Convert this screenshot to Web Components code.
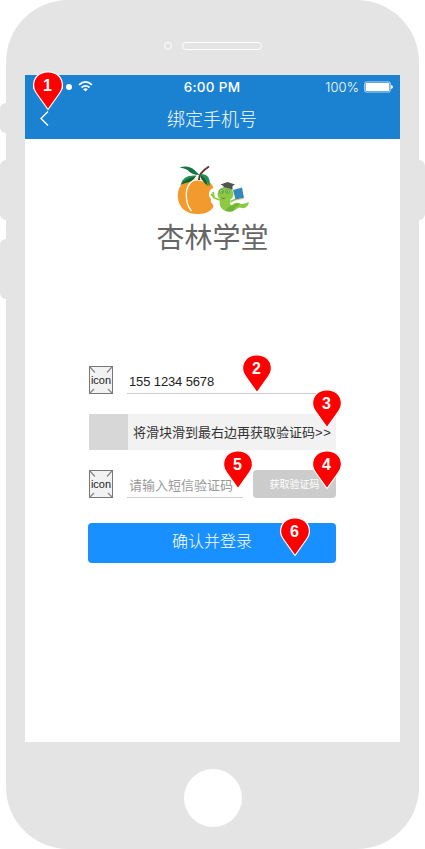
<!DOCTYPE html>
<html lang="zh-CN">
<head>
<meta charset="utf-8">
<title>绑定手机号</title>
<style>
html,body{margin:0;background:#fff;overflow:hidden}
body{font-family:"Liberation Sans","Noto Sans CJK SC",sans-serif}
</style>
</head>
<body>
<phone-frame>
  <status-bar></status-bar>
  <nav-bar>绑定手机号</nav-bar>
  <brand-logo>杏林学堂</brand-logo>
  <bind-form></bind-form>
  <note-pin slot="notes" style="left:33px;top:71px">1</note-pin>
  <note-pin slot="notes" style="left:242px;top:354px">2</note-pin>
  <note-pin slot="notes" style="left:312px;top:389px">3</note-pin>
  <note-pin slot="notes" style="left:312px;top:450px">4</note-pin>
  <note-pin slot="notes" style="left:223px;top:450px">5</note-pin>
  <note-pin slot="notes" style="left:280px;top:517px">6</note-pin>
</phone-frame>
<script>
function define(name, html) {
  const t = document.createElement('template');
  t.innerHTML = html;
  customElements.define(name, class extends HTMLElement {
    constructor() {
      super();
      this.attachShadow({mode: 'open'}).appendChild(t.content.cloneNode(true));
    }
  });
}

define('phone-frame', `<style>
:host{display:flex;position:relative;width:425px;height:849px;justify-content:space-between}
.side{width:6px;display:flex;flex-direction:column;padding-top:103px;box-sizing:border-box}
.side i{display:block;background:#e4e4e4;border-radius:6px 0 0 6px;height:60px;flex:none}
.side .mute{height:30px;margin-bottom:27px}
.side .up{margin-bottom:19px}
.right{padding-top:160px}
.right i{border-radius:0 6px 6px 0}
.body{width:413px;height:849px;box-sizing:border-box;background:#e4e4e4;border-radius:62px;display:flex;flex-direction:column;align-items:center}
.top{height:75px;width:100%;box-sizing:border-box;padding:42px 0 0 158px;display:flex;gap:10px}
.cam,.spk{box-sizing:border-box;border:1px solid #fff;height:8px;border-radius:4px}
.cam{width:8px}.spk{width:80px}
.screen{width:375px;height:667px;background:#fff;display:flex;flex-direction:column}
.home{width:58px;height:58px;border-radius:50%;background:#fff;margin-top:27px;margin-left:1px}
</style>
<div class="side"><i class="mute"></i><i class="up"></i><i></i></div>
<div class="body"><div class="top"><span class="cam"></span><span class="spk"></span></div>
<div class="screen"><slot></slot></div><div class="home"></div></div>
<div class="side right"><i></i></div>
<slot name="notes"></slot>`);

define('status-bar', `<style>
:host{display:grid;grid-template-columns:1fr auto 1fr;align-items:center;height:24px;background:#1b82d2;color:#fff;padding:0 7px 0 6px}
svg{display:block}
.time{font:500 13.5px/24px Inter,sans-serif;letter-spacing:.3px}
.r{display:flex;justify-content:flex-end;align-items:center;gap:5px;font:300 13px/24px Inter,sans-serif;letter-spacing:.1px}
</style>
<svg width="70" height="24" fill="#fff"><circle cx="5" cy="12" r="3"/><circle cx="13" cy="12" r="3"/><circle cx="21" cy="12" r="3"/><circle cx="29" cy="12" r="3"/><circle cx="38" cy="12" r="3"/>
<g fill="none" stroke="#fff" stroke-width="1.7"><path d="M48 9.800Q54.500 4 61 9.800"/><path d="M50.500 12.500Q54.500 9.100 58.500 12.500"/></g><path d="M52.200 14.200Q54.500 12.500 56.800 14.200L54.500 16.500Z"/></svg>
<span class="time">6:00 PM</span>
<span class="r">100%<svg width="29" height="12"><rect x=".7" y="1" width="25.600" height="10" rx="1.500" fill="none" stroke="#fff" stroke-opacity=".7"/><rect x="1.700" y="2" width="23.600" height="8" rx=".5" fill="#fff"/><path d="M27 4Q29 4.500 29 6T27 8Z" fill="#fff"/></svg></span>`);

define('nav-bar', `<style>
:host{display:grid;grid-template-columns:39px 1fr 40px;height:40px;background:#1b82d2;color:#fff;font-size:18px;font-weight:300;line-height:42px;text-align:center}
svg{display:block}
</style><svg width="39" height="40"><path d="M23 12.500L16 19.500L23 26.500" fill="none" stroke="#fff" stroke-width="1.400"/></svg><span><slot></slot></span>`);

define('brand-logo', `<style>
:host{display:flex;flex-direction:column;align-items:center;padding-top:26px;height:201px;box-sizing:border-box}
svg{display:block;flex:none}
span{font:400 28px/32px "Noto Sans CJK SC",sans-serif;color:#666;margin-top:3px}
</style>
<svg width="110" height="52" viewBox="157.500 165 110 52">
<path d="M191 179.500C181 181 177 188 177.300 197C178 208 186 214 197 214Q206 214.500 211.500 209Q213.500 207 212.800 205Q209.500 202 210.500 199Q207.500 196 208.800 192Q210 188.500 213 188Q211 181 203 179.500Q197 178 191 179.500Z" fill="#f39a2e"/>
<path d="M192.500 180.500Q186 185 185.800 194Q185.500 205 191 211" fill="none" stroke="#fff" stroke-width="1.300"/>
<path d="M191 181Q198 178 205 182" fill="none" stroke="#fff" stroke-width="1.600"/>
<path d="M198.500 180Q198 173 208.500 166.500" fill="none" stroke="#62342a" stroke-width="2"/>
<path d="M179 167.500Q188 164.500 194 170L199 175Q191 175 187 170Q184 168 179 167.500Z" fill="#187342"/>
<path d="M180.500 184.500Q182 174.500 196 175.500Q194 180 186 181Q182 182 180.500 184.500Z" fill="#239153"/>
<path d="M179.500 185Q185 178.500 195 176.500Q192 182 185 183Z" fill="#145f35"/>
<path d="M200 174Q211 174 209 187Q206 180 200 177Z" fill="#239153"/>
<path d="M200 175.500Q205 177 207.500 186Q202 182 200 177Z" fill="#145f35"/>
<path d="M220 197Q217 206 223 210Q230 213.500 236 209Q239 206.500 241 208Q247 209 248.500 202L244.500 203.500Q241 204.500 238 203Q235 202 231.500 205Q229 206 229.500 199Z" fill="#8acb43"/>
<path d="M224.500 210.500Q228 206 233 205Q237 202 240 204Q235 206 233 211Q228 212.500 224.500 210.500Z" fill="#72b533"/>
<ellipse cx="225" cy="194" rx="8" ry="7" fill="#8acb43"/>
<path d="M219.500 200L214 198L210.500 194M213.500 198L212.500 192M229 202L237 198.500" fill="none" stroke="#8acb43" stroke-width="1.800"/>
<g fill="#a3d965" stroke="#3b8750" stroke-width=".6"><circle cx="221" cy="191.500" r="2"/><circle cx="227" cy="191.500" r="2"/></g>
<circle cx="221.500" cy="191.800" r=".6" fill="#193c33"/><circle cx="226.700" cy="191.800" r=".6" fill="#193c33"/>
<path d="M220 197Q223 199 225.500 197Q223 201 220 197Z" fill="#cc3933"/>
<path d="M220 184.500L227 182L234.500 184.500L232 186V190Q228 187 223 187.500V186Z" fill="#505354"/>
<path d="M232.500 190L241.500 187.500L243.500 198L235 199.500Z" fill="#3488bb"/><path d="M235 200L243 198.500" stroke="#d4b76a" stroke-width=".8"/>
</svg><span><slot></slot></span>`);

define('icon-box', `<style>
:host{display:block;width:24px;height:28px;flex:none}
svg{display:block}text{font:11px "Liberation Sans",sans-serif}
</style><svg width="24" height="28"><rect x=".5" y=".5" width="23" height="27" fill="#f2f2f2" stroke="#777"/><path d="M1 1L6 6.500M23 1L18 6.500M1 27L5 23M23 27L19 23" stroke="#888" stroke-width="1.200"/><text x="12" y="18" text-anchor="middle" fill="#222">icon</text></svg>`);

define('line-field', `<style>
:host{display:block;box-sizing:border-box;height:28px;border-bottom:1px solid #ccc;padding-left:2px;font-size:13px;line-height:31px;white-space:nowrap;color:#222}
</style><slot></slot>`);

define('bind-form', `<style>
:host{display:flex;flex-direction:column;margin-left:63px;padding-top:26px;width:248px}
.row{display:flex;padding-left:1px;height:28px}
icon-box{margin-right:14px}
.slide{display:flex;margin:20px 0 20px 1px;height:36px;background:#f2f2f2;color:#333;font-size:13px;line-height:37px;white-space:nowrap}
.slide b{font-weight:inherit;letter-spacing:.6px}
.knob{width:39px;background:#d7d7d7;margin-right:5px;flex:none}
.code{width:83px;height:28px;margin-left:10px;background:#ccc;color:#fff;border-radius:4px;font-size:10px;line-height:29px;text-align:center}
.submit{height:40px;margin-top:25px;background:#1890ff;color:#fff;border-radius:4px;font-size:16px;font-weight:300;line-height:38px;text-align:center}
</style>
<div class="row"><icon-box></icon-box><line-field style="width:191px;letter-spacing:-.13px">155 1234 5678</line-field></div>
<div class="slide"><div class="knob"></div><span>将滑块滑到最右边再获取验证码<b>&gt;&gt;</b></span></div>
<div class="row"><icon-box></icon-box><line-field style="width:116px;color:#999">请输入短信验证码</line-field><div class="code">获取验证码</div></div>
<div class="submit">确认并登录</div>`);

define('note-pin', `<style>
:host{display:block;position:absolute;width:30px;height:40px}
svg{display:block}
text{font:bold 16px "Liberation Sans",sans-serif;fill:#fff}
</style><svg width="30" height="40"><path d="M15 38.500L4.300 23.500C1.700 20 .6 17.500 .6 14.500C.6 6 6.500 .8 15 .8S29.400 6 29.400 14.500C29.400 17.500 28.300 20 25.700 23.500Z" fill="#f00" stroke="#fff" stroke-width="1.200"/><text x="14.500" y="20" text-anchor="middle"></text></svg>`);

document.querySelectorAll('note-pin').forEach(p => {
  p.shadowRoot.querySelector('text').textContent = p.textContent;
});
</script>
</body>
</html>
